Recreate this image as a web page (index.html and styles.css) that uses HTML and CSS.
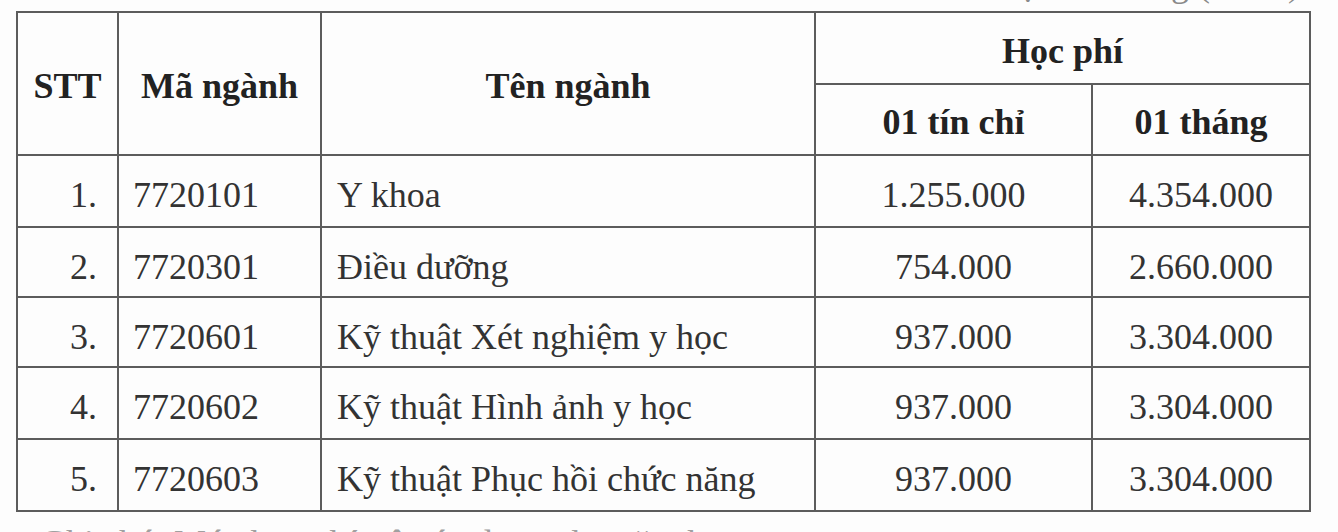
FILE: index.html
```html
<!DOCTYPE html>
<html lang="vi">
<head>
<meta charset="utf-8">
<title>Học phí</title>
<link rel="stylesheet" href="styles.css">
</head>
<body>
<div class="page">
  <div class="unit">Đơn vị tính: đồng (VNĐ)</div>
  <table class="fees">
    <colgroup>
      <col class="c-stt">
      <col class="c-code">
      <col class="c-name">
      <col class="c-credit">
      <col class="c-month">
    </colgroup>
    <thead>
      <tr class="h1">
        <th rowspan="2" class="th-tall">STT</th>
        <th rowspan="2" class="th-tall">Mã ngành</th>
        <th rowspan="2" class="th-tall">Tên ngành</th>
        <th colspan="2" class="th-group">Học phí</th>
      </tr>
      <tr class="h2">
        <th class="th-sub">01 tín chỉ</th>
        <th class="th-sub">01 tháng</th>
      </tr>
    </thead>
    <tbody>
      <tr class="r72">
        <td class="stt">1.</td><td class="code">7720101</td><td class="name">Y khoa</td><td class="num">1.255.000</td><td class="num">4.354.000</td>
      </tr>
      <tr class="r70">
        <td class="stt">2.</td><td class="code">7720301</td><td class="name">Điều dưỡng</td><td class="num">754.000</td><td class="num">2.660.000</td>
      </tr>
      <tr class="r70">
        <td class="stt">3.</td><td class="code">7720601</td><td class="name">Kỹ thuật Xét nghiệm y học</td><td class="num">937.000</td><td class="num">3.304.000</td>
      </tr>
      <tr class="r72">
        <td class="stt">4.</td><td class="code">7720602</td><td class="name">Kỹ thuật Hình ảnh y học</td><td class="num">937.000</td><td class="num">3.304.000</td>
      </tr>
      <tr class="r72">
        <td class="stt">5.</td><td class="code">7720603</td><td class="name">Kỹ thuật Phục hồi chức năng</td><td class="num">937.000</td><td class="num">3.304.000</td>
      </tr>
    </tbody>
  </table>
  <div class="note">Ghi chú: Mức học phí trên áp dụng cho năm học</div>
</div>
</body>
</html>
```
FILE: styles.css
```css
html, body {
  margin: 0;
  padding: 0;
  background: #fdfdfd;
}
body {
  width: 1338px;
  height: 532px;
  overflow: hidden;
  font-family: "Liberation Serif", "Times New Roman", serif;
  color: #333;
}
.page {
  display: flex;
  flex-direction: column;
  align-items: flex-start;
}
.unit {
  align-self: stretch;
  text-align: right;
  font-size: 36px;
  line-height: 41px;
  height: 41px;
  margin-top: -36px;
  padding-right: 38px;
  color: #8a8a8a;
}
.fees {
  margin-top: 6px;
  margin-left: 16px;
  border-collapse: collapse;
  table-layout: fixed;
  width: 1293px;
  font-size: 36px;
  line-height: 41px;
}
.c-stt { width: 101px; }
.c-code { width: 203px; }
.c-name { width: 494px; }
.c-credit { width: 277px; }
.c-month { width: 218px; }

.fees th, .fees td {
  border: 2px solid #5c5c5c;
  padding: 0;
  vertical-align: top;
  white-space: nowrap;
}
.fees th {
  font-weight: bold;
  color: #222;
  text-align: center;
}
.h1 { height: 72px; }
.h2 { height: 71px; }
.r72 { height: 72px; }
.r70 { height: 70px; }

.fees .th-tall { padding-top: 53px; }
.fees .th-group { padding-top: 18px; }
.fees .th-sub { padding-top: 17px; }

.fees td { padding-top: 19px; }
.fees .stt { text-align: right; padding-right: 20px; }
.fees .code { text-align: left; padding-left: 14px; }
.fees .name { text-align: left; padding-left: 15px; }
.fees .num { text-align: center; }

.note {
  margin-top: 11px;
  margin-left: 40px;
  font-size: 36px;
  line-height: 41px;
  color: #a0a0a0;
}
```
